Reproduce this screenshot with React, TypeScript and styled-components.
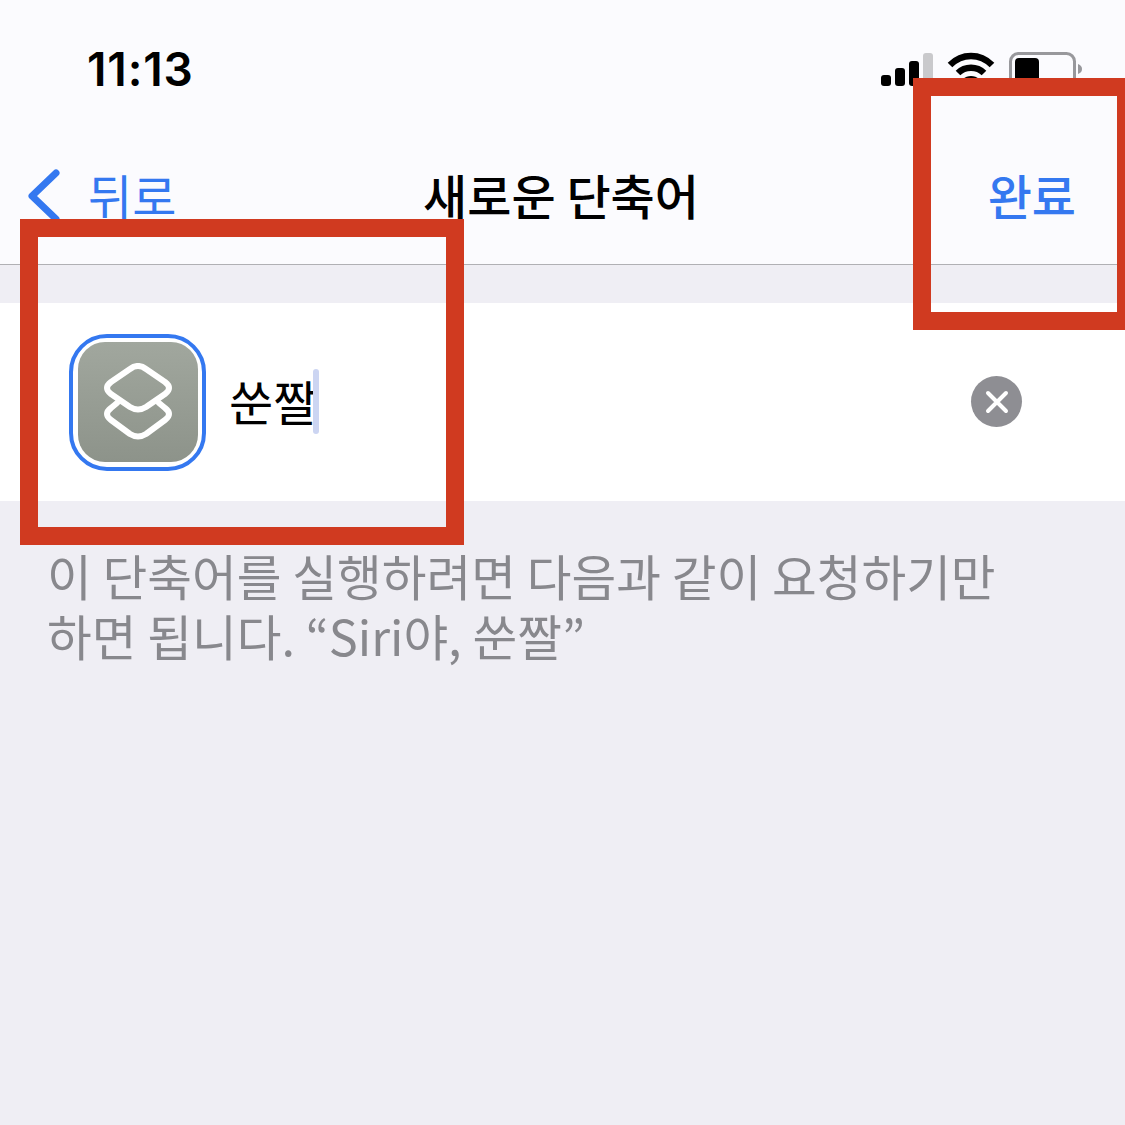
import styled, { createGlobalStyle } from 'styled-components';

const BLUE = '#3478f0';
const KR = '"Noto Sans CJK KR", "Noto Sans", sans-serif';

const GlobalStyle = createGlobalStyle`
  html, body {
    margin: 0;
    padding: 0;
    background: #efeef4;
  }
`;

const Page = styled.div`
  position: relative;
  width: 1125px;
  height: 1125px;
  overflow: hidden;
  background: #efeef4;
  font-family: ${KR};
`;

const Header = styled.header`
  height: 264px;
  background: #fbfbfe;
  border-bottom: 1px solid #b0b0b4;
`;

const StatusBar = styled.div`
  height: 132px;
  display: flex;
  justify-content: space-between;
  align-items: flex-start;
  padding: 40px 42px 0 87px;
  box-sizing: border-box;
`;

const Clock = styled.div`
  font-family: Inter, "Liberation Sans", sans-serif;
  font-size: 46px;
  font-weight: 600;
  line-height: 58px;
  letter-spacing: 0.9px;
  color: #000;
`;

const StatusIcons = styled.div`
  display: flex;
  align-items: flex-start;
  gap: 14px;
  padding-top: 12px;
`;

const NavBar = styled.nav`
  display: grid;
  grid-template-columns: 1fr auto 1fr;
  align-items: center;
  height: 124px;
  padding: 0 30px 0 27px;
`;

const BackLink = styled.div`
  display: flex;
  align-items: center;
  gap: 27px;
  color: ${BLUE};
  font-size: 48px;
  line-height: 60px;

  svg {
    margin-top: 4px;
  }
`;

const Title = styled.div`
  font-size: 48px;
  font-weight: 500;
  line-height: 60px;
  color: #000;
`;

const DoneLink = styled.div`
  justify-self: end;
  margin-right: 19px;
  color: ${BLUE};
  font-size: 48px;
  font-weight: 500;
  line-height: 60px;
`;

const NameRow = styled.section`
  display: flex;
  align-items: center;
  height: 198px;
  margin-top: 38px;
  padding: 0 103px 0 69px;
  background: #fff;
`;

const IconFrame = styled.div`
  display: flex;
  align-items: center;
  justify-content: center;
  width: 137px;
  height: 137px;
  box-sizing: border-box;
  border: 4px solid ${BLUE};
  border-radius: 38px;
  background: #fff;
`;

const IconTile = styled.div`
  display: flex;
  align-items: center;
  justify-content: center;
  width: 120px;
  height: 120px;
  border-radius: 27px;
  background: linear-gradient(180deg, #a1a79e 0%, #8d938a 100%);
`;

const NameText = styled.div`
  display: flex;
  align-items: center;
  flex: 1;
  margin-left: 23px;
  font-size: 48px;
  line-height: 60px;
  color: #000;
`;

const NameLabel = styled.span`
  margin-top: -4px;
`;

const Caret = styled.span`
  width: 6px;
  height: 65px;
  margin-left: -4px;
  margin-top: -2px;
  border-radius: 3px;
  background: #ccd5f2;
`;

const ClearButton = styled.div`
  display: flex;
  align-items: center;
  justify-content: center;
  width: 51px;
  height: 51px;
  margin-top: -1px;
  border-radius: 50%;
  background: #8e8e93;
`;

const Hint = styled.p`
  margin: 44px 0 0;
  padding: 0 100px 0 47px;
  font-size: 48.6px;
  font-weight: 400;
  line-height: 60px;
  color: #88888d;
`;

const Callout = styled.div<{ $left: number; $top: number; $width: number; $height: number }>`
  position: absolute;
  left: ${p => p.$left}px;
  top: ${p => p.$top}px;
  width: ${p => p.$width}px;
  height: ${p => p.$height}px;
  box-sizing: border-box;
  border: 18px solid #d03a20;
`;

function CellSignal() {
  return (
    <svg width="52" height="36" viewBox="0 0 52 36">
      <rect x="0" y="23" width="10" height="11" rx="3" fill="#000" />
      <rect x="14" y="16" width="10" height="18" rx="3" fill="#000" />
      <rect x="28" y="9" width="10" height="25" rx="3" fill="#000" />
      <rect x="42" y="1" width="10" height="33" rx="3" fill="#c9c9cc" />
    </svg>
  );
}

function Wifi() {
  return (
    <svg width="48" height="36" viewBox="0 0 48 36" fill="none" stroke="#000" strokeWidth="6.5">
      <path d="M3 13 C15 1 33 1 45 13" />
      <path d="M11 21 C18 14 30 14 37 21" />
      <path d="M24 34 L16 27 C20 23 28 23 32 27 Z" fill="#000" stroke="none" />
    </svg>
  );
}

function Battery() {
  return (
    <svg width="74" height="40" viewBox="0 0 74 40">
      <rect x="1.5" y="1.5" width="64" height="36" rx="8" fill="none" stroke="#98989c" strokeWidth="3" />
      <rect x="6" y="6" width="24" height="28" rx="4" fill="#000" />
      <path d="M69 12 C72 13 73 15 73 17 C73 19 72 21 69 22 Z" fill="#98989c" />
    </svg>
  );
}

function BackChevron() {
  return (
    <svg width="34" height="54" viewBox="0 0 34 54" fill="none" stroke={BLUE} strokeWidth="7" strokeLinecap="round" strokeLinejoin="round">
      <path d="M29 4 L5 27 L29 50" />
    </svg>
  );
}

function LayersIcon() {
  return (
    <svg width="70" height="78" viewBox="0 0 70 78" fill="none" stroke="#fff" strokeWidth="6" strokeLinejoin="round" strokeLinecap="round">
      <path d="M14 40 L8 45 Q0 51 8 57 L27 71 Q35 76 43 71 L62 57 Q70 51 62 45 L56 40" />
      <path d="M27 6 Q35 0 43 6 L62 19 Q70 25 62 31 L43 44 Q35 49 27 44 L8 31 Q0 25 8 19 Z" />
    </svg>
  );
}

function ClearX() {
  return (
    <svg width="24" height="24" viewBox="0 0 24 24" stroke="#fff" strokeWidth="4" strokeLinecap="round">
      <path d="M3 3 L21 21 M21 3 L3 21" />
    </svg>
  );
}

export default function App() {
  return (
    <Page>
      <GlobalStyle />
      <Header>
        <StatusBar>
          <Clock>11:13</Clock>
          <StatusIcons>
            <CellSignal />
            <Wifi />
            <Battery />
          </StatusIcons>
        </StatusBar>
        <NavBar>
          <BackLink>
            <BackChevron />
            뒤로
          </BackLink>
          <Title>새로운 단축어</Title>
          <DoneLink>완료</DoneLink>
        </NavBar>
      </Header>
      <NameRow>
        <IconFrame>
          <IconTile>
            <LayersIcon />
          </IconTile>
        </IconFrame>
        <NameText>
          <NameLabel>쑨짤</NameLabel>
          <Caret />
        </NameText>
        <ClearButton>
          <ClearX />
        </ClearButton>
      </NameRow>
      <Hint>이 단축어를 실행하려면 다음과 같이 요청하기만 하면 됩니다. “Siri야, 쑨짤”</Hint>
      <Callout $left={20} $top={219} $width={444} $height={326} />
      <Callout $left={913} $top={78} $width={222} $height={252} />
    </Page>
  );
}
